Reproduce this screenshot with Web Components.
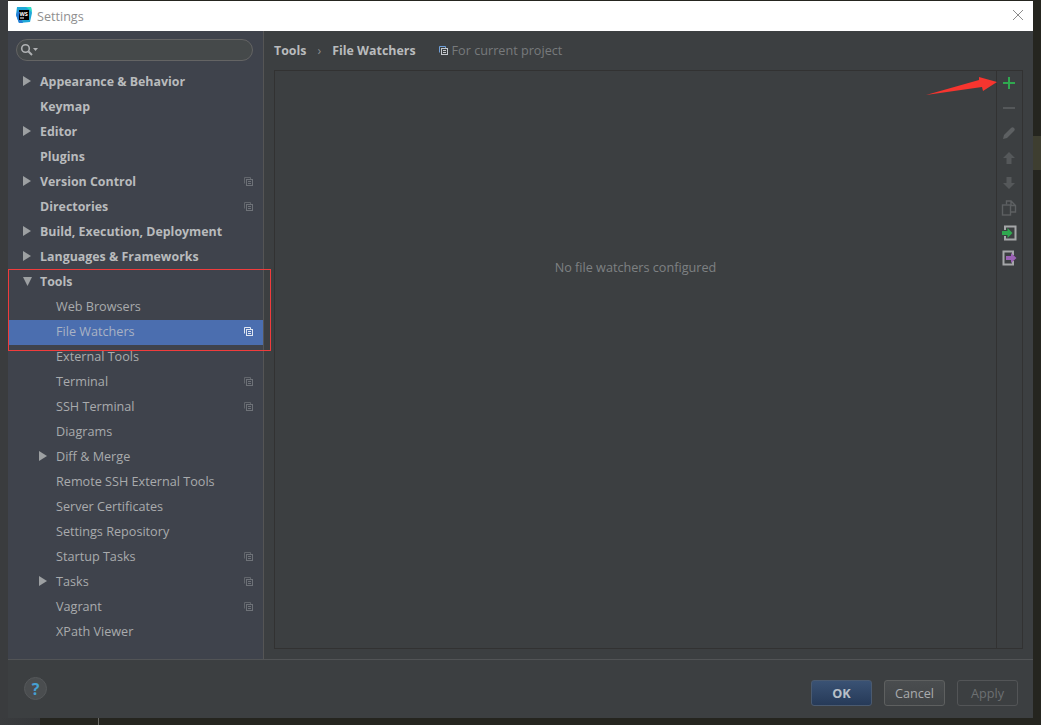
<!DOCTYPE html>
<html>
<head>
<meta charset="utf-8">
<title>Settings</title>
<style>
    html, body { margin: 0; padding: 0; height: 100%; overflow: hidden; }
    body { background: #25251f; font-family: "Open Sans", sans-serif; }
</style>
</head>
<body>
<desktop-back></desktop-back>
<settings-window>
    <title-bar slot="title">Settings</title-bar>
    <settings-sidebar slot="side">
        <tree-row arrow="right" bold>Appearance &amp; Behavior</tree-row>
        <tree-row bold>Keymap</tree-row>
        <tree-row arrow="right" bold>Editor</tree-row>
        <tree-row bold>Plugins</tree-row>
        <tree-row arrow="right" bold copy>Version Control</tree-row>
        <tree-row bold copy>Directories</tree-row>
        <tree-row arrow="right" bold>Build, Execution, Deployment</tree-row>
        <tree-row arrow="right" bold>Languages &amp; Frameworks</tree-row>
        <tree-row arrow="down" bold>Tools</tree-row>
        <tree-row child>Web Browsers</tree-row>
        <tree-row child selected copy>File Watchers</tree-row>
        <tree-row child>External Tools</tree-row>
        <tree-row child copy>Terminal</tree-row>
        <tree-row child copy>SSH Terminal</tree-row>
        <tree-row child>Diagrams</tree-row>
        <tree-row child arrow="right">Diff &amp; Merge</tree-row>
        <tree-row child>Remote SSH External Tools</tree-row>
        <tree-row child>Server Certificates</tree-row>
        <tree-row child>Settings Repository</tree-row>
        <tree-row child copy>Startup Tasks</tree-row>
        <tree-row child arrow="right" copy>Tasks</tree-row>
        <tree-row child copy>Vagrant</tree-row>
        <tree-row child>XPath Viewer</tree-row>
    </settings-sidebar>
    <watcher-panel slot="main"></watcher-panel>
    <dialog-footer slot="footer"></dialog-footer>
</settings-window>

<script>
// Copy/scope icon shared by the tree rows and the breadcrumb
const copyIcon = (back, front) => `<svg width="9" height="9" viewBox="0 0 9 9" fill="none" stroke="${front}" stroke-width="1"><path d="M.5 6.500V.5h6v1.500" stroke="${back}"/><rect x="2.500" y="2.500" width="6" height="6"/><path d="M4 4.500h3M4 6.500h3"/></svg>`;

// Bits of the desktop that show around the dialog
class DesktopBack extends HTMLElement {
    constructor() {
        super();
        this.attachShadow({ mode: 'open' });
        this.shadowRoot.innerHTML = `
            <style>
                :host { display: block; position: absolute; inset: 0; overflow: hidden; }
                div { position: absolute; }
                .corner { left: 0; top: 718px; width: 40px; height: 7px; background: linear-gradient(90deg, #3a3c3e, #35373a); }
                .rule { left: 98px; top: 718px; width: 1px; height: 7px; background: #6a6a66; }
                .band { left: 1033px; top: 136px; width: 8px; height: 34px; background: #3e3e30; }
                .top { left: 0; top: 0; width: 8px; height: 1px; background: #3a3c3e; }
            </style>
            <div class="corner"></div>
            <div class="rule"></div>
            <div class="band"></div>
            <div class="top"></div>
        `;
    }
}

class SettingsWindow extends HTMLElement {
    constructor() {
        super();
        this.attachShadow({ mode: 'open' });
        this.shadowRoot.innerHTML = `
            <style>
                :host {
                    display: grid;
                    grid-template-columns: 256px 1fr;
                    grid-template-rows: 30px 628px 59px;
                    width: 1025px;
                    margin: 1px 0 0 8px;
                    background: #3c3f41;
                    position: relative;
                    box-shadow: -8px 0 0 #3a3c3e;
                }
                .title { grid-column: 1 / 3; }
                .footer { grid-column: 1 / 3; }
                .mark-box {
                    position: absolute;
                    left: 0;
                    top: 268px;
                    width: 261px;
                    height: 80px;
                    border: 1px solid #f03c3c;
                    pointer-events: none;
                }
                .arrow { position: absolute; left: 916px; top: 75px; }
            </style>
            <div class="title"><slot name="title"></slot></div>
            <slot name="side"></slot>
            <slot name="main"></slot>
            <div class="footer"><slot name="footer"></slot></div>
            <div class="mark-box"></div>
            <svg class="arrow" width="74" height="22" viewBox="0 0 74 22"><path d="M2 19L55 4 55 1 73 6 59 15 58 11Z" fill="#f7352f"/></svg>
        `;
    }
}

class TitleBar extends HTMLElement {
    constructor() {
        super();
        this.attachShadow({ mode: 'open' });
        this.shadowRoot.innerHTML = `
            <style>
                :host {
                    display: flex;
                    align-items: center;
                    height: 30px;
                    background: #fff;
                    color: #8f8f8f;
                    font: 12.600px "Open Sans", sans-serif;
                    padding: 0 10px 0 8px;
                    box-sizing: border-box;
                }
                .logo { margin-right: 5px; margin-bottom: 2px; }
                .text { flex: 1; }
                .close { display: block; margin-bottom: 2px; }
            </style>
            <svg class="logo" width="16" height="16" viewBox="0 0 16 16">
                <path d="M1 0H15L16 6 14 15 3 16 0 8Z" fill="#1fa8d8"/>
                <path d="M10 0H15L16 5Z" fill="#2ee0c6"/>
                <path d="M0 8L3 16H7L2 3Z" fill="#2a7fd6"/>
                <rect x="3" y="3" width="10" height="10" fill="#000"/>
                <text x="3.500" y="9" font-family="Open Sans" font-weight="700" font-size="5.500" fill="#fff">WS</text>
                <rect x="4" y="10.500" width="4" height="1" fill="#fff"/>
            </svg>
            <span class="text"><slot></slot></span>
            <svg class="close" width="10" height="10" viewBox="0 0 10 10" stroke="#8c8c8c" stroke-width="1"><path d="M0 0L10 10M10 0L0 10"/></svg>
        `;
    }
}

class SearchBox extends HTMLElement {
    constructor() {
        super();
        this.attachShadow({ mode: 'open' });
        this.shadowRoot.innerHTML = `
            <style>
                :host {
                    display: flex;
                    align-items: center;
                    height: 22px;
                    margin: 8px 10px 9px 8px;
                    padding-left: 3px;
                    box-sizing: border-box;
                    background: #45494a;
                    border: 1px solid #646464;
                    border-radius: 11px;
                }
            </style>
            <svg width="19" height="14" viewBox="0 0 19 14" fill="none">
                <circle cx="5.500" cy="5.500" r="3.800" stroke="#afb1b3" stroke-width="1.600"/>
                <path d="M8.500 8.500L12 12" stroke="#afb1b3" stroke-width="2"/>
                <path d="M13 5H18L15.500 8Z" fill="#afb1b3"/>
            </svg>
        `;
    }
}

class SettingsSidebar extends HTMLElement {
    constructor() {
        super();
        this.attachShadow({ mode: 'open' });
        this.shadowRoot.innerHTML = `
            <style>
                :host {
                    display: block;
                    background: #3f434c;
                    border-right: 1px solid #555;
                    box-sizing: border-box;
                    height: 628px;
                }
            </style>
            <search-box></search-box>
            <slot></slot>
        `;
    }
}

class TreeRow extends HTMLElement {
    constructor() {
        super();
        this.attachShadow({ mode: 'open' });
    }

    connectedCallback() {
        const arrow = this.getAttribute('arrow');
        let arrowSvg = '';
        if (arrow === 'right') arrowSvg = '<path d="M0 0L8 5 0 10Z"/>';
        if (arrow === 'down') arrowSvg = '<path d="M0 1H9L4.500 10Z"/>';
        const left = this.hasAttribute('child') ? 31 : 15;
        const selected = this.hasAttribute('selected');
        this.shadowRoot.innerHTML = `
            <style>
                :host {
                    display: flex;
                    align-items: center;
                    height: 25px;
                    box-sizing: border-box;
                    padding: 0 10px 3px ${left}px;
                    color: #a9abad;
                    font: 12.650px "Open Sans", sans-serif;
                }
                :host([bold]) { font-weight: 700; font-size: 12.400px; color: #b9bbbd; }
                :host([selected]) { background: #4b6eaf; color: #a9b2c4; }
                .arrow { width: 17px; flex: none; display: flex; }
                .label { flex: 1; white-space: nowrap; }
                .copy { display: flex; }
            </style>
            <span class="arrow">${arrowSvg ? `<svg width="10" height="10" viewBox="0 0 10 10" fill="#9da0a2">${arrowSvg}</svg>` : ''}</span>
            <span class="label"><slot></slot></span>
            ${this.hasAttribute('copy') ? `<span class="copy">${selected ? copyIcon('#dfe6f2', '#dfe6f2') : copyIcon('#62666c', '#6e7278')}</span>` : ''}
        `;
    }
}

class WatcherPanel extends HTMLElement {
    constructor() {
        super();
        this.attachShadow({ mode: 'open' });
        this.shadowRoot.innerHTML = `
            <style>
                :host {
                    display: flex;
                    flex-direction: column;
                    height: 628px;
                    padding: 0 10px 10px 10px;
                    box-sizing: border-box;
                    background: #3c3f41;
                    font: 12.650px "Open Sans", sans-serif;
                }
                .crumbs {
                    display: flex;
                    align-items: center;
                    height: 39px;
                    padding-bottom: 1px;
                    box-sizing: border-box;
                    color: #b9bbbd;
                    font-weight: 700;
                    font-size: 12.400px;
                    flex: none;
                }
                .sep { margin: 0 11px; font-weight: 400; color: #8b8e90; }
                .scope {
                    margin-left: 23px;
                    font-weight: 400;
                    font-size: 12.650px;
                    color: #777a7c;
                    display: flex;
                    align-items: center;
                    gap: 4px;
                }
                .box {
                    flex: 1;
                    display: flex;
                    border: 1px solid #323232;
                    min-height: 0;
                }
                .empty {
                    flex: 1;
                    display: flex;
                    align-items: center;
                    justify-content: center;
                    color: #7e8183;
                    padding-bottom: 186px;
                    box-sizing: border-box;
                }
                .tools {
                    width: 26px;
                    border-left: 1px solid #323232;
                    display: flex;
                    flex-direction: column;
                    align-items: center;
                    padding-right: 2px;
                    box-sizing: border-box;
                }
                .tools svg { display: block; margin: 4.500px 0; width: 16px; height: 16px; }
                .tools svg:first-child { margin-top: 3.500px; }
            </style>
            <div class="crumbs">
                <span>Tools</span><span class="sep">›</span><span>File Watchers</span>
                <span class="scope">${copyIcon('#6f9fd8', '#c4c8cc')}For current project</span>
            </div>
            <div class="box">
                <div class="empty">No file watchers configured</div>
                <div class="tools">
                    <svg viewBox="0 0 16 16"><path d="M7 2h2v5h5v2H9v5H7V9H2V7h5Z" fill="#2fa84f"/></svg>
                    <svg viewBox="0 0 16 16"><rect x="2" y="7" width="12" height="2" fill="#55585a"/></svg>
                    <svg viewBox="0 0 16 16"><path d="M2 14L3 10 10 3C11 2 12 2 13 3S14 5 13 6L6 13Z" fill="#5d6062"/></svg>
                    <svg viewBox="0 0 16 16"><path d="M8 2L14 8H10.500V14H5.500V8H2Z" fill="#55585a"/></svg>
                    <svg viewBox="0 0 16 16"><path d="M8 14L2 8H5.500V2H10.500V8H14Z" fill="#55585a"/></svg>
                    <svg viewBox="0 0 16 16" fill="none" stroke="#5d6062" stroke-width="1.400"><rect x="1.500" y="5" width="8" height="10"/><path d="M5.500 4.500V1H10L14.500 5.500V12H10M10 1V5.500H14.500"/></svg>
                    <svg viewBox="0 0 16 16"><path d="M4 5V1.500H14.500V14.500H4V11" fill="none" stroke="#a5a7a9" stroke-width="2"/><path d="M1 6H6.500V3L11.500 8 6.500 13V10H1Z" fill="#2fa84f"/></svg>
                    <svg viewBox="0 0 16 16"><path d="M12 5V1.500H2.500V14.500H12V11" fill="none" stroke="#a5a7a9" stroke-width="2"/><path d="M5 6H10V3L15.500 8 10 13V10H5Z" fill="#9b62b5"/></svg>
                </div>
            </div>
        `;
    }
}

class DialogButton extends HTMLElement {
    constructor() {
        super();
        this.attachShadow({ mode: 'open' });
        this.shadowRoot.innerHTML = `
            <style>
                :host {
                    display: flex;
                    align-items: center;
                    justify-content: center;
                    width: 61px;
                    height: 26px;
                    box-sizing: border-box;
                    border: 1px solid #5e6060;
                    border-radius: 3px;
                    background: linear-gradient(#4a4d4f, #414446);
                    color: #a9abad;
                    font: 12.650px "Open Sans", sans-serif;
                }
                :host([primary]) {
                    background: linear-gradient(#3a5274, #263a58);
                    border-color: #4a5a70;
                    color: #b9c0c8;
                    font-weight: 700;
                }
                :host([disabled]) {
                    background: none;
                    border-color: #535557;
                    color: #6d7072;
                }
            </style>
            <slot></slot>
        `;
    }
}

class DialogFooter extends HTMLElement {
    constructor() {
        super();
        this.attachShadow({ mode: 'open' });
        this.shadowRoot.innerHTML = `
            <style>
                :host {
                    display: flex;
                    align-items: flex-start;
                    height: 59px;
                    box-sizing: border-box;
                    border-top: 1px solid #525456;
                    background: #3c3f41;
                    padding: 20px 15px 12px 16px;
                    gap: 12px;
                }
                .help {
                    width: 23px;
                    height: 23px;
                    margin-top: -3px;
                    box-sizing: border-box;
                    border-radius: 50%;
                    background: #4a4d4f;
                    border: 1px solid #55585a;
                    color: #46a0d2;
                    font: 700 16px "Open Sans", sans-serif;
                    display: flex;
                    align-items: center;
                    justify-content: center;
                }
                .spacer { flex: 1; }
            </style>
            <div class="help">?</div>
            <div class="spacer"></div>
            <dialog-button primary>OK</dialog-button>
            <dialog-button>Cancel</dialog-button>
            <dialog-button disabled>Apply</dialog-button>
        `;
    }
}

customElements.define('desktop-back', DesktopBack);
customElements.define('dialog-button', DialogButton);
customElements.define('dialog-footer', DialogFooter);
customElements.define('search-box', SearchBox);
customElements.define('tree-row', TreeRow);
customElements.define('settings-sidebar', SettingsSidebar);
customElements.define('watcher-panel', WatcherPanel);
customElements.define('title-bar', TitleBar);
customElements.define('settings-window', SettingsWindow);
</script>
</body>
</html>
